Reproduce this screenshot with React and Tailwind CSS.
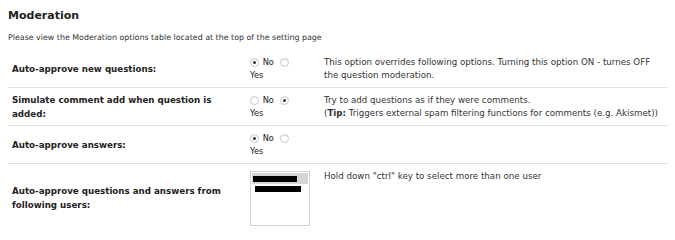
function Radio({ checked }) {
  return (
    <span className="inline-flex h-[9px] w-[9px] items-center justify-center rounded-full border border-[#c8c8c8] bg-white align-middle shadow-[inset_0_1px_1px_rgba(0,0,0,0.08)]">
      {checked && <span className="h-[3px] w-[3px] rounded-full bg-[#333]" />}
    </span>
  );
}

function YesNo({ value }) {
  return (
    <div className="w-[50px] leading-[13px]">
      <Radio checked={value === "no"} /> <span className="ml-[1px]">No</span>{" "}
      <span className="ml-[3px]">
        <Radio checked={value === "yes"} />
      </span>{" "}
      <span>Yes</span>
    </div>
  );
}

const rows = [
  {
    label: "Auto-approve new questions:",
    value: "no",
    desc: (
      <>
        This option overrides following options. Turning this option ON - turnes OFF
        the question moderation.
      </>
    ),
  },
  {
    label: "Simulate comment add when question is added:",
    value: "yes",
    desc: (
      <>
        Try to add questions as if they were comments.
        <br />(<b>Tip:</b> Triggers external spam filtering functions for comments (e.g. Akismet))
      </>
    ),
  },
  { label: "Auto-approve answers:", value: "no", desc: null },
];

export default function App() {
  return (
    <div className="min-h-[211px] w-[675px] overflow-hidden bg-white pl-2 text-[#222] font-['DejaVu_Sans',Verdana,sans-serif]">
      <h2 className="pt-[9px] text-[11px] font-bold leading-[14px]">Moderation</h2>
      <p className="mt-[10px] text-[7.9px] leading-[10px] text-[#333]">
        Please view the Moderation options table located at the top of the setting page
      </p>

      <table className="mt-[7px] w-[660px] border-collapse text-[8.7px]">
        <tbody>
          {rows.map((r) => (
            <tr key={r.label} className="border-b border-[#e1e1e1]">
              <td className="w-[242px] pl-1 pr-2 align-middle text-[8.7px] font-bold leading-[14px]">
                {r.label}
              </td>
              <td className="w-[74px] pt-[6px] pb-[5px] align-top text-[8.3px]">
                <YesNo value={r.value} />
              </td>
              <td className="pt-[6px] pb-[5px] pr-[10px] align-top leading-[13px] text-[#333]">{r.desc}</td>
            </tr>
          ))}
          <tr>
            <td className="pl-1 pr-2 align-middle text-[8.7px] font-bold leading-[14px]">
              Auto-approve questions and answers from following users:
            </td>
            <td className="pt-[7px] pb-[6px] align-top">
              <div className="h-[55px] w-[60px] border border-[#d4d4d4] bg-white p-[1px]">
                <div className="flex h-[11px] items-center bg-[#d6d6d6] pl-[1px]">
                  <span className="h-[6px] w-[44px] bg-black" />
                </div>
                <div className="flex h-[10px] items-center pl-[3px]">
                  <span className="h-[6px] w-[46px] bg-black" />
                </div>
              </div>
            </td>
            <td className="pt-[6px] pr-[10px] align-top leading-[13px] text-[#333]">
              Hold down "ctrl" key to select more than one user
            </td>
          </tr>
        </tbody>
      </table>
    </div>
  );
}
